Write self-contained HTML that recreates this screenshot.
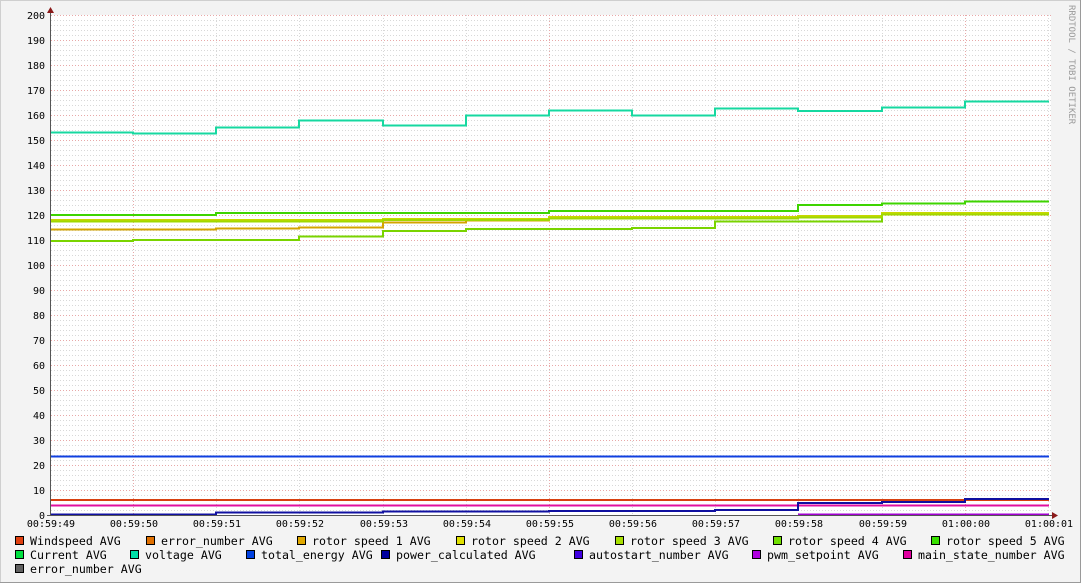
<!DOCTYPE html>
<html><head><meta charset="utf-8"><style>
html,body{margin:0;padding:0;background:#f3f3f3;}
svg{display:block;}
text{font-family:"DejaVu Sans Mono","Liberation Mono",monospace;}
</style></head><body>
<svg width="1081" height="583" viewBox="0 0 1081 583" xmlns="http://www.w3.org/2000/svg">
<rect x="0" y="0" width="1081" height="583" fill="#f3f3f3"/>
<line x1="0.5" y1="0" x2="0.5" y2="583" stroke="#cfcfcf"/>
<line x1="0" y1="0.5" x2="1081" y2="0.5" stroke="#cfcfcf"/>
<line x1="1080.5" y1="0" x2="1080.5" y2="583" stroke="#9a9a9a"/>
<line x1="0" y1="582.5" x2="1081" y2="582.5" stroke="#9a9a9a"/>
<rect x="51" y="15" width="1000" height="500" fill="#ffffff"/>
<g stroke-width="1" stroke-dasharray="1,2" fill="none">
<g stroke="#d8d8d8">
<path d="M51 20.5H1051M51 25.5H1051M51 30.5H1051M51 35.5H1051M51 45.5H1051M51 50.5H1051M51 55.5H1051M51 60.5H1051M51 70.5H1051M51 75.5H1051M51 80.5H1051M51 85.5H1051M51 95.5H1051M51 100.5H1051M51 105.5H1051M51 110.5H1051M51 120.5H1051M51 125.5H1051M51 130.5H1051M51 135.5H1051M51 145.5H1051M51 150.5H1051M51 155.5H1051M51 160.5H1051M51 170.5H1051M51 175.5H1051M51 180.5H1051M51 185.5H1051M51 195.5H1051M51 200.5H1051M51 205.5H1051M51 210.5H1051M51 220.5H1051M51 225.5H1051M51 230.5H1051M51 235.5H1051M51 245.5H1051M51 250.5H1051M51 255.5H1051M51 260.5H1051M51 270.5H1051M51 275.5H1051M51 280.5H1051M51 285.5H1051M51 295.5H1051M51 300.5H1051M51 305.5H1051M51 310.5H1051M51 320.5H1051M51 325.5H1051M51 330.5H1051M51 335.5H1051M51 345.5H1051M51 350.5H1051M51 355.5H1051M51 360.5H1051M51 370.5H1051M51 375.5H1051M51 380.5H1051M51 385.5H1051M51 395.5H1051M51 400.5H1051M51 405.5H1051M51 410.5H1051M51 420.5H1051M51 425.5H1051M51 430.5H1051M51 435.5H1051M51 445.5H1051M51 450.5H1051M51 455.5H1051M51 460.5H1051M51 470.5H1051M51 475.5H1051M51 480.5H1051M51 485.5H1051M51 495.5H1051M51 500.5H1051M51 505.5H1051M51 510.5H1051"/>
<path d="M216.5 15V515M299.5 15V515M383.5 15V515M466.5 15V515M632.5 15V515M715.5 15V515M798.5 15V515M882.5 15V515M1048.5 15V515"/>
</g>
<g stroke="#e8a8a8">
<path d="M51 15.5H1051M51 40.5H1051M51 65.5H1051M51 90.5H1051M51 115.5H1051M51 140.5H1051M51 165.5H1051M51 190.5H1051M51 215.5H1051M51 240.5H1051M51 265.5H1051M51 290.5H1051M51 315.5H1051M51 340.5H1051M51 365.5H1051M51 390.5H1051M51 415.5H1051M51 440.5H1051M51 465.5H1051M51 490.5H1051"/>
<path d="M133.5 15V515M549.5 15V515M965.5 15V515"/>
</g>
</g>
<g font-size="10" fill="#000" text-anchor="end">
<text x="45" y="19">200</text><text x="45" y="44">190</text><text x="45" y="69">180</text><text x="45" y="94">170</text><text x="45" y="119">160</text><text x="45" y="144">150</text><text x="45" y="169">140</text><text x="45" y="194">130</text><text x="45" y="219">120</text><text x="45" y="244">110</text><text x="45" y="269">100</text><text x="45" y="294">90</text><text x="45" y="319">80</text><text x="45" y="344">70</text><text x="45" y="369">60</text><text x="45" y="394">50</text><text x="45" y="419">40</text><text x="45" y="444">30</text><text x="45" y="469">20</text><text x="45" y="494">10</text><text x="45" y="519">0</text>
</g>
<g font-size="10" fill="#000" text-anchor="middle">
<text x="51" y="527">00:59:49</text><text x="134" y="527">00:59:50</text><text x="217" y="527">00:59:51</text><text x="300" y="527">00:59:52</text><text x="384" y="527">00:59:53</text><text x="467" y="527">00:59:54</text><text x="550" y="527">00:59:55</text><text x="633" y="527">00:59:56</text><text x="716" y="527">00:59:57</text><text x="799" y="527">00:59:58</text><text x="883" y="527">00:59:59</text><text x="966" y="527">01:00:00</text><text x="1049" y="527">01:00:01</text>
</g>
<g fill="none" stroke-width="2">
<path stroke="#16d8a0" d="M51 132.5H133V133.5H216V127.5H299V120.5H383V125.5H466V115.5H549V110.5H632V115.5H715V108.5H798V111H882V107.5H965V101.5H1049"/>
<path stroke="#7ad400" d="M51 241H133V240H299V236.5H383V231H466V229H632V228H715V221.5H882V213.5H1049"/>
<path stroke="#d4a400" d="M51 229.5H216V228.5H299V227.5H383V222.5H466V220.5H549V218H798V216H882V214H1049"/>
<path stroke="#c8d800" d="M51 220H383V219H549V217H798V216H882V213H1049"/>
<path stroke="#a0d800" d="M51 221.5H383V220H549V218.5H798V217.5H882V214.5H1049"/>
<path stroke="#3ed400" d="M51 215H216V213H549V211H798V205H882V203.5H965V201.5H1049"/>
<path stroke="#1040e0" d="M51 456.5H1049"/>
<path stroke="#d84010" d="M51 500H1049"/>
<path stroke="#e010a0" d="M51 505.5H1049"/>
<path stroke="#a000d0" d="M798 514.5H1049"/>
<path stroke="#1010a0" d="M51 514.5H216V512.5H383V511.5H549V511H715V510H798V503H882V502H965V499H1049"/>
</g>
<line x1="50.5" y1="12" x2="50.5" y2="516" stroke="#555"/>
<line x1="47" y1="515.5" x2="1054" y2="515.5" stroke="#555"/>
<path d="M47 13L50.5 7L54 13Z" fill="#8b1a1a"/>
<path d="M1052 512L1058 515.5L1052 519Z" fill="#8b1a1a"/>
<text transform="translate(1069,5) rotate(90)" font-size="9" fill="#9a9a9a">RRDTOOL / TOBI OETIKER</text>
<g font-size="11.6" fill="#000" stroke="#000" stroke-width="1">
<rect x="15.5" y="536.5" width="8" height="8" fill="#e04010"/>
<rect x="146.5" y="536.5" width="8" height="8" fill="#e07000"/>
<rect x="297.5" y="536.5" width="8" height="8" fill="#e0a800"/>
<rect x="456.5" y="536.5" width="8" height="8" fill="#e0e000"/>
<rect x="615.5" y="536.5" width="8" height="8" fill="#a8e000"/>
<rect x="773.5" y="536.5" width="8" height="8" fill="#70e000"/>
<rect x="931.5" y="536.5" width="8" height="8" fill="#38e000"/>
<rect x="15.5" y="550.5" width="8" height="8" fill="#00e040"/>
<rect x="130.5" y="550.5" width="8" height="8" fill="#00e0a8"/>
<rect x="246.5" y="550.5" width="8" height="8" fill="#0040e0"/>
<rect x="381.5" y="550.5" width="8" height="8" fill="#0000a0"/>
<rect x="574.5" y="550.5" width="8" height="8" fill="#4000e0"/>
<rect x="752.5" y="550.5" width="8" height="8" fill="#b000e0"/>
<rect x="903.5" y="550.5" width="8" height="8" fill="#e000a0"/>
<rect x="15.5" y="564.5" width="8" height="8" fill="#606060"/>
</g>
<g font-size="11.6" fill="#000">
<text x="30" y="545">Windspeed AVG</text>
<text x="161" y="545">error_number AVG</text>
<text x="312" y="545">rotor speed 1 AVG</text>
<text x="471" y="545">rotor speed 2 AVG</text>
<text x="630" y="545">rotor speed 3 AVG</text>
<text x="788" y="545">rotor speed 4 AVG</text>
<text x="946" y="545">rotor speed 5 AVG</text>
<text x="30" y="559">Current AVG</text>
<text x="145" y="559">voltage AVG</text>
<text x="261" y="559">total_energy AVG</text>
<text x="396" y="559">power_calculated AVG</text>
<text x="589" y="559">autostart_number AVG</text>
<text x="767" y="559">pwm_setpoint AVG</text>
<text x="918" y="559">main_state_number AVG</text>
<text x="30" y="573">error_number AVG</text>
</g>
</svg>
</body></html>
